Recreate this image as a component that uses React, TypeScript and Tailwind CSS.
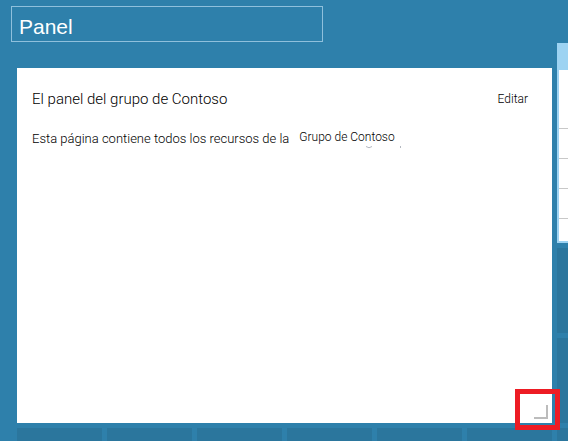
import React from "react";

const tile = "bg-[#2b769d]";

function ResizeHandle() {
  return (
    <button
      type="button"
      aria-label="Cambiar tamaño"
      className="absolute right-1 bottom-1 size-[14px] border-r-2 border-b-2 border-[#bcbcbc]"
    />
  );
}

function LinkMarks() {
  return (
    <svg
      aria-hidden="true"
      viewBox="0 0 38 3"
      className="absolute top-full right-[-8px] h-[3px] w-[38px]"
      fill="none"
      stroke="#b4b8c0"
    >
      <path d="M1 0.5 Q4 3 7 0.5" />
      <path d="M35.5 0 V2" />
    </svg>
  );
}

function DashboardCard() {
  return (
    <section
      className="relative min-h-[355px] bg-white px-[15px] pt-5 font-light text-black"
      style={{ fontFamily: 'Roboto, "Liberation Sans", sans-serif' }}
    >
      <header className="flex items-center justify-between pr-[9px]">
        <h1 className="text-[15px] leading-[22px] font-light">El panel del grupo de Contoso</h1>
        <button type="button" className="text-[12px] leading-5">Editar</button>
      </header>
      <p className="mt-[18px] flex items-start gap-[10px] text-[13px] leading-[22px]">
        <span>Esta página contiene todos los recursos de la</span>
        <a href="#grupo" className="relative text-[12px] leading-[18px]">
          Grupo de Contoso
          <LinkMarks />
        </a>
      </p>
      <ResizeHandle />
      <div className="pointer-events-none absolute -right-2 -bottom-[7px] h-[41px] w-[45px] border-5 border-[#ed1c24]" />
    </section>
  );
}

function SideList() {
  return (
    <div className="h-[200px] border-b-2 border-l-2 border-[#9dd3f2] bg-white">
      <div className="h-[27px] bg-[#9dd3f2]" />
      <div className="h-[59px] border-b border-[#c8c8c8]" />
      <div className="h-[30px] border-b border-[#c8c8c8]" />
      <div className="h-[30px] border-b border-[#c8c8c8]" />
      <div className="h-[30px] border-b border-[#c8c8c8]" />
    </div>
  );
}

export default function App() {
  return (
    <main
      className="flex min-h-screen overflow-hidden bg-[#2e80ab]"
      style={{ fontFamily: '"Liberation Sans", Arial, sans-serif' }}
    >
      <div className="flex min-w-0 flex-1 flex-col pt-[6px]">
        <input
          aria-label="Nombre del panel"
          defaultValue="Panel"
          className="ml-[11px] h-9 w-[312px] border border-[#8fc0dc] bg-transparent pt-1.5 pl-[7px] text-[21px] leading-6 text-white outline-none"
        />
        <div className="mt-[26px] ml-[17px] flex flex-1 flex-col gap-[5px]">
          <DashboardCard />
          <div className="grid flex-1 grid-cols-6 gap-[5px]">
            <div className={tile} />
            <div className={tile} />
            <div className={tile} />
            <div className={tile} />
            <div className={tile} />
            <div className={tile} />
          </div>
        </div>
      </div>
      <aside className="ml-[5px] flex w-[11px] flex-col gap-[5px] pt-[43px]">
        <SideList />
        <div className={`h-[85px] ${tile}`} />
        <div className={`h-[85px] ${tile}`} />
        <div className={`flex-1 ${tile}`} />
      </aside>
    </main>
  );
}
